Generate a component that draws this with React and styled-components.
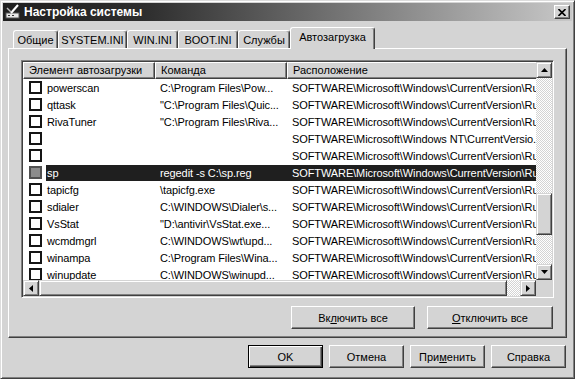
import React from "react";
import styled, { createGlobalStyle } from "styled-components";

const GlobalStyle = createGlobalStyle`
  body {
    margin: 0;
    background: #d4d4d4;
  }
`;

const Window = styled.div`
  width: 575px;
  height: 379px;
  box-sizing: border-box;
  background: #d4d4d4;
  border: 1px solid;
  border-color: #dcdcdc #404040 #404040 #dcdcdc;
  box-shadow: inset 1px 1px #fff, inset -1px -1px #808080;
  padding: 2px;
  display: flex;
  flex-direction: column;
  font-family: "Liberation Sans", Arial, sans-serif;
  font-size: 11px;
  color: #000;
`;

const TitleBar = styled.div`
  height: 18px;
  flex: none;
  display: flex;
  align-items: center;
  padding: 0 2px;
  background: linear-gradient(to right, #1f1f1f 0%, #2e2e2e 25%, #c8c8c8 100%);
  color: #fff;
  font-weight: bold;
  font-size: 12px;
`;

const TitleText = styled.span`
  margin-left: 3px;
  white-space: nowrap;
`;

const CloseButton = styled.div`
  margin-left: auto;
  width: 16px;
  height: 14px;
  box-sizing: border-box;
  background: #d4d4d4;
  border: 1px solid;
  border-color: #fff #404040 #404040 #fff;
  box-shadow: inset -1px -1px #808080;
  display: flex;
  align-items: center;
  justify-content: center;
`;

const Body = styled.div`
  flex: 1;
  display: flex;
  flex-direction: column;
  padding: 6px 5px 0 5px;
`;

const TabStrip = styled.div`
  height: 21px;
  display: flex;
  align-items: flex-end;
  padding-left: 5px;
`;

const Tab = styled.div`
  position: relative;
  z-index: ${(p) => (p.$active ? 2 : 1)};
  width: ${(p) => p.$w}px;
  height: ${(p) => (p.$active ? 22 : 18)}px;
  margin-bottom: ${(p) => (p.$active ? -1 : 0)}px;
  padding-bottom: ${(p) => (p.$active ? 3 : 0)}px;
  box-sizing: border-box;
  background: #d4d4d4;
  border-top: 1px solid #fff;
  border-left: 1px solid #fff;
  border-right: 1px solid #404040;
  box-shadow: inset -1px 0 #808080;
  border-radius: 3px 3px 0 0;
  display: flex;
  align-items: center;
  justify-content: center;
  white-space: nowrap;
`;

const Panel = styled.div`
  width: 559px;
  height: 290px;
  box-sizing: border-box;
  border: 1px solid;
  border-color: #fff #404040 #404040 #fff;
  box-shadow: inset -1px -1px #808080;
  padding: 11px 12px 0 12px;
  display: flex;
  flex-direction: column;
`;

const ListView = styled.div`
  width: 533px;
  height: 238px;
  box-sizing: border-box;
  border: 1px solid;
  border-color: #808080 #fff #fff #808080;
  box-shadow: inset 1px 1px #404040, inset -1px -1px #d4d4d4;
  padding: 1px;
  display: grid;
  grid-template-columns: 1fr 16px;
  grid-template-rows: 1fr 16px;
`;

const ListContent = styled.div`
  background: #fff;
  overflow: hidden;
`;

const Header = styled.div`
  display: flex;
  height: 17px;
`;

const HeaderCell = styled.div`
  flex: none;
  width: ${(p) => p.$w}px;
  box-sizing: border-box;
  background: #d4d4d4;
  border: 1px solid;
  border-color: #fff #404040 #404040 #fff;
  box-shadow: inset -1px -1px #808080;
  padding-left: 5px;
  line-height: 15px;
  white-space: nowrap;
  overflow: hidden;
`;

const Row = styled.div`
  display: flex;
  align-items: center;
  height: 17px;
`;

const CheckCell = styled.div`
  flex: none;
  width: 23px;
  display: flex;
  align-items: center;
  padding-left: 6px;
  box-sizing: border-box;
`;

const Check = styled.div`
  width: 13px;
  height: 13px;
  box-sizing: border-box;
  border: 2px solid ${(p) => (p.$grey ? "#505050" : "#151515")};
  background: ${(p) => (p.$grey ? "#8c8c8c" : "#fff")};
`;

const Cells = styled.div`
  display: flex;
  height: 16px;
  letter-spacing: -0.1px;
  background: ${(p) => (p.$sel ? "#1f1f1f" : "transparent")};
  color: ${(p) => (p.$sel ? "#fff" : "#000")};
`;

const Cell = styled.div`
  flex: none;
  width: ${(p) => p.$w}px;
  padding-left: ${(p) => p.$pad}px;
  box-sizing: border-box;
  line-height: 16px;
  white-space: nowrap;
  overflow: hidden;
`;

const VScroll = styled.div`
  display: flex;
  flex-direction: column;
`;

const HScroll = styled.div`
  display: flex;
`;

const ScrollButton = styled.div`
  flex: none;
  width: 16px;
  height: 16px;
  box-sizing: border-box;
  background: #d4d4d4;
  border: 1px solid;
  border-color: #d4d4d4 #404040 #404040 #d4d4d4;
  box-shadow: inset 1px 1px #fff, inset -1px -1px #808080;
  display: flex;
  align-items: center;
  justify-content: center;
`;

const Track = styled.div`
  flex: 1;
  display: flex;
  flex-direction: ${(p) => (p.$vertical ? "column" : "row")};
  background: repeating-conic-gradient(#fff 0 25%, #d4d4d4 0 50%) 0 0 / 2px 2px;
`;

const Thumb = styled.div`
  flex: none;
  box-sizing: border-box;
  background: #d4d4d4;
  border: 1px solid;
  border-color: #d4d4d4 #404040 #404040 #d4d4d4;
  box-shadow: inset 1px 1px #fff, inset -1px -1px #808080;
  width: ${(p) => (p.$vertical ? "16px" : `${p.$size}px`)};
  height: ${(p) => (p.$vertical ? `${p.$size}px` : "16px")};
  margin-top: ${(p) => (p.$vertical ? p.$offset : 0)}px;
  margin-left: ${(p) => (p.$vertical ? 0 : p.$offset)}px;
`;

const Corner = styled.div`
  background: #d4d4d4;
`;

const PanelButtons = styled.div`
  display: flex;
  justify-content: flex-end;
  gap: 12px;
  margin-top: 8px;
  padding-right: 1px;
`;

const Button = styled.button`
  width: ${(p) => p.$w}px;
  height: 23px;
  padding: 0;
  box-sizing: border-box;
  background: #d4d4d4;
  font-family: "Liberation Sans", Arial, sans-serif;
  font-size: 11px;
  color: #000;
  border: 1px solid;
  border-color: ${(p) =>
    p.$default ? "#000" : "#fff #404040 #404040 #fff"};
  box-shadow: ${(p) =>
    p.$default
      ? "inset 1px 1px #fff, inset -1px -1px #404040, inset -2px -2px #808080"
      : "inset -1px -1px #808080"};
`;

const Footer = styled.div`
  display: flex;
  justify-content: flex-end;
  gap: 6px;
  margin-top: 7px;
  padding-right: 1px;
`;

const Arrow = ({ dir }) => {
  const pts = {
    up: "0,4 3.5,0 7,4",
    down: "0,0 7,0 3.5,4",
    left: "4,0 4,7 0,3.5",
    right: "0,0 0,7 4,3.5",
  }[dir];
  const vertical = dir === "up" || dir === "down";
  return (
    <svg width={vertical ? 7 : 4} height={vertical ? 4 : 7}>
      <polygon points={pts} fill="#000" />
    </svg>
  );
};

const AppIcon = () => (
  <svg width="16" height="16" viewBox="0 0 16 16">
    <rect x="1" y="9" width="13" height="5" fill="#e8e8e8" stroke="#555" />
    <rect x="3" y="11" width="2" height="1" fill="#333" />
    <rect x="7" y="11" width="2" height="1" fill="#333" />
    <path d="M13 1 L6 9" stroke="#fff" strokeWidth="2" />
    <path d="M2 4 L6 8" stroke="#bbb" strokeWidth="1.5" />
  </svg>
);

const tabs = [
  { label: "Общие", w: 45 },
  { label: "SYSTEM.INI", w: 69 },
  { label: "WIN.INI", w: 51 },
  { label: "BOOT.INI", w: 60 },
  { label: "Службы", w: 52 },
  { label: "Автозагрузка", w: 85, active: true },
];

const RUN = "SOFTWARE\\Microsoft\\Windows\\CurrentVersion\\Run";

const rows = [
  { name: "powerscan", cmd: "C:\\Program Files\\Pow...", loc: RUN },
  { name: "qttask", cmd: "\"C:\\Program Files\\Quic...", loc: RUN },
  { name: "RivaTuner", cmd: "\"C:\\Program Files\\Riva...", loc: RUN },
  { name: "", cmd: "", loc: "SOFTWARE\\Microsoft\\Windows NT\\CurrentVersio..." },
  { name: "", cmd: "", loc: RUN },
  { name: "sp", cmd: "regedit -s C:\\sp.reg", loc: RUN, sel: true },
  { name: "tapicfg", cmd: "\\tapicfg.exe", loc: RUN },
  { name: "sdialer", cmd: "C:\\WINDOWS\\Dialer\\s...", loc: RUN },
  { name: "VsStat", cmd: "\"D:\\antivir\\VsStat.exe...", loc: RUN },
  { name: "wcmdmgrl", cmd: "C:\\WINDOWS\\wt\\upd...", loc: RUN },
  { name: "winampa", cmd: "C:\\Program Files\\Wina...", loc: RUN },
  { name: "winupdate", cmd: "C:\\WINDOWS\\winupd...", loc: RUN },
];

export default function App() {
  return (
    <>
      <GlobalStyle />
      <Window>
        <TitleBar>
          <AppIcon />
          <TitleText>Настройка системы</TitleText>
          <CloseButton>
            <svg width="8" height="7" viewBox="0 0 8 7">
              <path d="M0.5 0 L7.5 7 M7.5 0 L0.5 7" stroke="#000" strokeWidth="1.6" />
            </svg>
          </CloseButton>
        </TitleBar>
        <Body>
          <TabStrip>
            {tabs.map((t) => (
              <Tab key={t.label} $w={t.w} $active={t.active}>
                {t.label}
              </Tab>
            ))}
          </TabStrip>
          <Panel>
            <ListView>
              <ListContent>
                <Header>
                  <HeaderCell $w={132}>Элемент автозагрузки</HeaderCell>
                  <HeaderCell $w={132}>Команда</HeaderCell>
                  <HeaderCell $w={300}>Расположение</HeaderCell>
                </Header>
                {rows.map((r, i) => (
                  <Row key={i}>
                    <CheckCell>
                      <Check $grey={r.sel} />
                    </CheckCell>
                    <Cells $sel={r.sel}>
                      <Cell $w={109} $pad={1}>{r.name}</Cell>
                      <Cell $w={132} $pad={5}>{r.cmd}</Cell>
                      <Cell $w={300} $pad={5}>{r.loc}</Cell>
                    </Cells>
                  </Row>
                ))}
              </ListContent>
              <VScroll>
                <ScrollButton>
                  <Arrow dir="up" />
                </ScrollButton>
                <Track $vertical>
                  <Thumb $vertical $size={42} $offset={115} />
                </Track>
                <ScrollButton>
                  <Arrow dir="down" />
                </ScrollButton>
              </VScroll>
              <HScroll>
                <ScrollButton>
                  <Arrow dir="left" />
                </ScrollButton>
                <Track>
                  <Thumb $size={468} $offset={0} />
                </Track>
                <ScrollButton>
                  <Arrow dir="right" />
                </ScrollButton>
              </HScroll>
              <Corner />
            </ListView>
            <PanelButtons>
              <Button $w={124}>
                Вк<u>л</u>ючить все
              </Button>
              <Button $w={126}>
                <u>О</u>тключить все
              </Button>
            </PanelButtons>
          </Panel>
          <Footer>
            <Button $w={75} $default>
              OK
            </Button>
            <Button $w={75}>Отмена</Button>
            <Button $w={75}>
              При<u>м</u>енить
            </Button>
            <Button $w={75}>Справка</Button>
          </Footer>
        </Body>
      </Window>
    </>
  );
}
